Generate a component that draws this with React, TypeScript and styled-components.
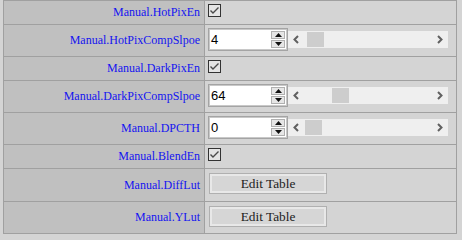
import React from "react";
import styled, { createGlobalStyle } from "styled-components";

const Global = createGlobalStyle`
  *, *::before, *::after { box-sizing: border-box; }
  html, body { margin: 0; padding: 0; background: #d4d4d4; }
  body { width: 462px; height: 240px; overflow: hidden; }
`;

const Wrapper = styled.div`
  padding-left: 3px;
`;

const Grid = styled.div`
  display: grid;
  grid-template-columns: 200px 251px;
  gap: 1px;
  padding: 1px;
  background: #a0a0a0;
  width: max-content;
`;

const LabelCell = styled.div<{ $h: number }>`
  height: ${(p) => p.$h}px;
  background: #c0c0c0;
  display: flex;
  align-items: center;
  justify-content: flex-end;
  padding-right: 4px;
  font-family: "Liberation Serif", serif;
  font-size: 12px;
  color: #1414f0;
  white-space: nowrap;
`;

const ValueCell = styled.div<{ $h: number; $pad: string }>`
  height: ${(p) => p.$h}px;
  background: #d4d4d4;
  padding: ${(p) => p.$pad};
  display: flex;
  align-items: flex-start;
`;

const CheckBox = styled.span`
  display: block;
  width: 13px;
  height: 13px;
  line-height: 0;
`;

const SpinWrap = styled.div`
  display: flex;
  align-items: center;
`;

const SpinBox = styled.div`
  width: 80px;
  height: 23px;
  background: #ffffff;
  border: 1px solid #a4a4a4;
  box-shadow: inset 0 0 0 1px #c8c8c8;
  display: flex;
  align-items: stretch;
  padding: 1px;
`;

const SpinText = styled.div`
  flex: 1;
  font-family: "Liberation Sans", Arial, sans-serif;
  font-size: 13px;
  color: #000;
  padding-left: 1px;
  line-height: 19px;
`;

const SpinButtons = styled.div`
  width: 15px;
  display: flex;
  flex-direction: column;
  gap: 1px;
  padding: 1px 1px 1px 0;
`;

const SpinButton = styled.div`
  flex: 1;
  background: #e6e6e6;
  border: 1px solid #b0b0b0;
  display: flex;
  align-items: center;
  justify-content: center;
  line-height: 0;
`;

const Scroll = styled.div`
  width: 160px;
  height: 17px;
  background: #efefef;
  display: flex;
`;

const ScrollArrow = styled.div`
  width: 17px;
  height: 17px;
  line-height: 0;
`;

const ScrollTrack = styled.div`
  flex: 1;
  position: relative;
`;

const Thumb = styled.div`
  position: absolute;
  top: 1px;
  width: 17px;
  height: 15px;
  background: #cdcdcd;
`;

const TableButton = styled.button`
  margin: 1px 0 0 1px;
  width: 118px;
  height: 21px;
  padding: 0;
  background: #d6d6d6;
  border: 1px solid #b0b0b0;
  box-shadow: inset 0 0 0 2px #e8e8e8;
  font-family: "Liberation Serif", serif;
  font-size: 13.33px;
  color: #1c1c1c;
  line-height: 17px;
`;

const Check = () => (
  <CheckBox>
    <svg width="13" height="13" viewBox="0 0 13 13">
      <rect x="0.5" y="0.5" width="12" height="12" fill="#e4e4e4" stroke="#333" />
      <path d="M2.5 6.5 L5 9 L10.5 3.5" fill="none" stroke="#4a4a4a" strokeWidth="1.4" />
    </svg>
  </CheckBox>
);

const Tri = ({ up }: { up: boolean }) => (
  <svg width="7" height="4" viewBox="0 0 7 4">
    <path d={up ? "M0 4 L3.5 0 L7 4 Z" : "M0 0 L3.5 4 L7 0 Z"} fill="#111" />
  </svg>
);

const Spinner = ({ value }: { value: number }) => (
  <SpinWrap>
    <SpinBox>
      <SpinText>{value}</SpinText>
      <SpinButtons>
        <SpinButton>
          <Tri up />
        </SpinButton>
        <SpinButton>
          <Tri up={false} />
        </SpinButton>
      </SpinButtons>
    </SpinBox>
    <Scroll>
      <ScrollArrow>
        <svg width="17" height="17" viewBox="0 0 17 17">
          <path d="M10 5 L6.5 8.5 L10 12" fill="none" stroke="#606060" strokeWidth="2" />
        </svg>
      </ScrollArrow>
      <ScrollTrack>
        <Thumb style={{ left: Math.round((value / 255) * 109) }} />
      </ScrollTrack>
      <ScrollArrow>
        <svg width="17" height="17" viewBox="0 0 17 17">
          <path d="M7 5 L10.5 8.5 L7 12" fill="none" stroke="#606060" strokeWidth="2" />
        </svg>
      </ScrollArrow>
    </Scroll>
  </SpinWrap>
);

type Row =
  | { label: string; kind: "check"; h: number }
  | { label: string; kind: "spin"; h: number; value: number }
  | { label: string; kind: "button"; h: number };

const rows: Row[] = [
  { label: "Manual.HotPixEn", kind: "check", h: 23 },
  { label: "Manual.HotPixCompSlpoe", kind: "spin", h: 31, value: 4 },
  { label: "Manual.DarkPixEn", kind: "check", h: 23 },
  { label: "Manual.DarkPixCompSlpoe", kind: "spin", h: 31, value: 64 },
  { label: "Manual.DPCTH", kind: "spin", h: 31, value: 0 },
  { label: "Manual.BlendEn", kind: "check", h: 23 },
  { label: "Manual.DiffLut", kind: "button", h: 32 },
  { label: "Manual.YLut", kind: "button", h: 31 },
];

export default function App() {
  return (
    <>
      <Global />
      <Wrapper>
        <Grid>
          {rows.map((r) => (
            <React.Fragment key={r.label}>
              <LabelCell $h={r.h}>{r.label}</LabelCell>
              <ValueCell $h={r.h} $pad="3px 3px">
                {r.kind === "check" && <Check />}
                {r.kind === "spin" && <Spinner value={r.value} />}
                {r.kind === "button" && <TableButton>Edit Table</TableButton>}
              </ValueCell>
            </React.Fragment>
          ))}
        </Grid>
      </Wrapper>
    </>
  );
}
